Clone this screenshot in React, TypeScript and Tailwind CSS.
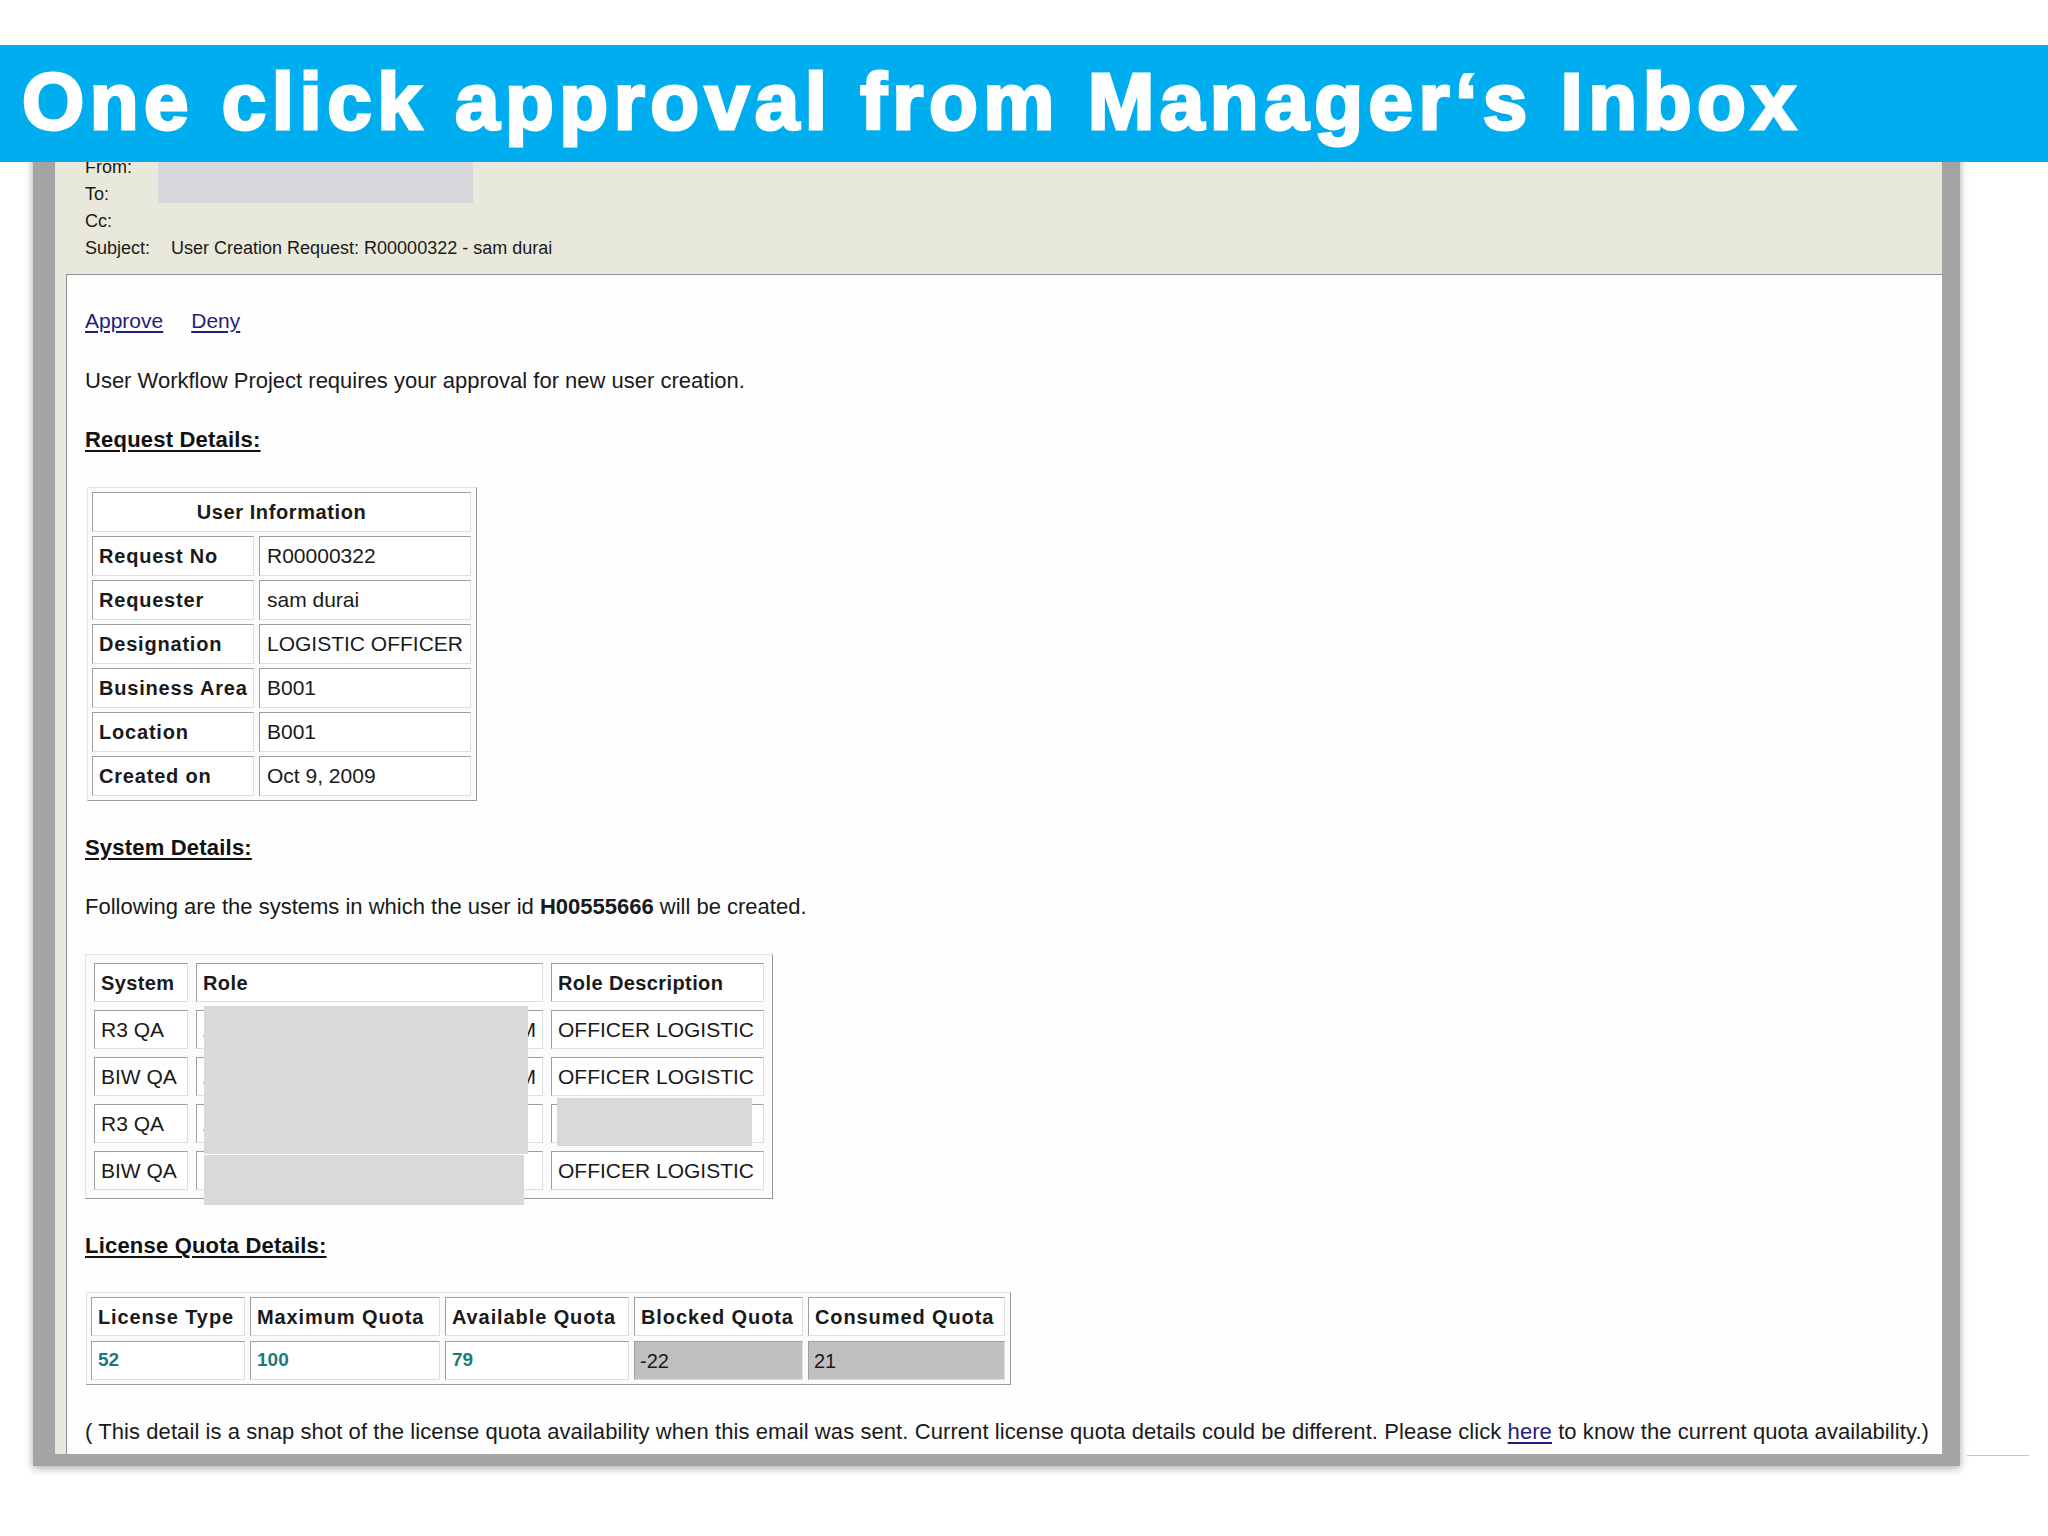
import React from 'react';

const font = "font-['Liberation_Sans',Arial,sans-serif]";

// 3D-ish cell border like old html tables
const cell =
  'border border-t-[#9f9f9f] border-l-[#9f9f9f] border-r-[#dedede] border-b-[#dedede] bg-white';
const outer =
  'border border-t-[#e2e2e2] border-l-[#e2e2e2] border-r-[#9a9a9a] border-b-[#9a9a9a] bg-[#fbfbfb]';

const userInfo: [string, string][] = [
  ['Request No', 'R00000322'],
  ['Requester', 'sam durai'],
  ['Designation', 'LOGISTIC OFFICER'],
  ['Business Area', 'B001'],
  ['Location', 'B001'],
  ['Created on', 'Oct 9, 2009'],
];

const systems = [
  { system: 'R3 QA', left: 'Z', right: 'M', desc: 'OFFICER LOGISTIC' },
  { system: 'BIW QA', left: 'Z', right: 'M', desc: 'OFFICER LOGISTIC' },
  { system: 'R3 QA', left: 'Z', right: '', desc: '' },
  { system: 'BIW QA', left: '', right: '', desc: 'OFFICER LOGISTIC' },
];

const quotaHeads = ['License Type', 'Maximum Quota', 'Available Quota', 'Blocked Quota', 'Consumed Quota'];

function SectionTitle({ children }: { children: React.ReactNode }) {
  return (
    <div className="h-[30px] leading-[30px] text-[22px] font-bold tracking-[0.2px] underline underline-offset-[3px] text-[#111]">
      {children}
    </div>
  );
}

function HeaderRow({ label, value }: { label: string; value?: string }) {
  return (
    <div className="flex h-[27px] items-center text-[18px] text-[#1a1a1a]">
      <div className="w-[86px]">{label}</div>
      <div>{value}</div>
    </div>
  );
}

export default function App() {
  return (
    <div className={`${font} w-[2048px] h-[1536px] bg-white overflow-hidden`}>
      <div className="h-[45px]" />
      <div className="relative z-10 h-[117px] bg-[#00aeef] flex items-center pl-[22px] pb-[4px]">
        <h1 className="text-white text-[80px] leading-none font-bold tracking-[5.5px] [-webkit-text-stroke:3px_white]">
          One click approval from Manager‘s Inbox
        </h1>
      </div>

      <div className="flex items-end pl-[33px] -mt-[40px]">
        {/* mail window */}
        <div className="w-[1927px] bg-[#a4a4a4] pl-[22px] pr-[18px] pb-[12px] shadow-[0_2px_8px_rgba(0,0,0,0.35)]">
          <div className="bg-[#e9e9db]">
            <div className="relative pt-[32px] pb-[12px] pl-[30px]">
              <HeaderRow label="From:" />
              <HeaderRow label="To:" />
              <HeaderRow label="Cc:" />
              <HeaderRow label="Subject:" value="User Creation Request: R00000322 - sam durai" />
              <div className="absolute left-[103px] top-[20px] w-[315px] h-[61px] bg-[#d8d8dc]" />
            </div>

            <div className="ml-[11px] border-l border-t border-[#8f8f8f] bg-[#fefefe] pl-[18px] pt-[31px] pb-[7px] text-[#1a1a1a]">
              <div className="flex h-[30px] items-center gap-[28px] text-[21px] text-[#1f1f7a]">
                <span className="underline underline-offset-[3px]">Approve</span>
                <span className="underline underline-offset-[3px]">Deny</span>
              </div>

              <p className="mt-[30px] h-[30px] leading-[30px] text-[22px]">
                User Workflow Project requires your approval for new user creation.
              </p>

              <div className="mt-[29px]">
                <SectionTitle>Request Details:</SectionTitle>
              </div>

              {/* user information */}
              <div className={`${outer} mt-[32px] ml-[2px] w-[390px] grid grid-cols-[162px_212px] gap-x-[5px] gap-y-[4px] p-[4px]`}>
                <div className={`${cell} col-span-2 h-[40px] flex items-center justify-center font-bold text-[20px] tracking-[0.6px]`}>
                  User Information
                </div>
                {userInfo.map(([k, v]) => (
                  <React.Fragment key={k}>
                    <div className={`${cell} h-[40px] flex items-center pl-[6px] font-bold text-[20px] tracking-[0.8px]`}>{k}</div>
                    <div className={`${cell} h-[40px] flex items-center pl-[7px] text-[21px]`}>{v}</div>
                  </React.Fragment>
                ))}
              </div>

              <div className="mt-[32px]">
                <SectionTitle>System Details:</SectionTitle>
              </div>

              <p className="mt-[29px] h-[30px] leading-[30px] text-[22px]">
                Following are the systems in which the user id <b>H00555666</b> will be created.
              </p>

              {/* systems */}
              <div className="relative mt-[32px] w-[688px]">
                <div className={`${outer} grid grid-cols-[94px_347px_213px] gap-[8px] p-[8px]`}>
                  <div className={`${cell} h-[39px] flex items-center pl-[6px] font-bold text-[20px] tracking-[0.4px]`}>System</div>
                  <div className={`${cell} h-[39px] flex items-center pl-[6px] font-bold text-[20px] tracking-[0.4px]`}>Role</div>
                  <div className={`${cell} h-[39px] flex items-center pl-[6px] font-bold text-[20px] tracking-[0.4px]`}>Role Description</div>
                  {systems.map((s, i) => (
                    <React.Fragment key={i}>
                      <div className={`${cell} h-[39px] flex items-center pl-[6px] text-[21px]`}>{s.system}</div>
                      <div className={`${cell} h-[39px] flex items-center justify-between px-[6px] text-[21px]`}>
                        <span>{s.left}</span>
                        <span>{s.right}</span>
                      </div>
                      <div className={`${cell} h-[39px] flex items-center pl-[6px] text-[21px]`}>{s.desc}</div>
                    </React.Fragment>
                  ))}
                </div>
                {/* redactions */}
                <div className="absolute left-[119px] top-[52px] w-[324px] h-[148px] bg-[#d9d9d9]" />
                <div className="absolute left-[119px] top-[201px] w-[320px] h-[50px] bg-[#d9d9d9]" />
                <div className="absolute left-[472px] top-[144px] w-[195px] h-[48px] bg-[#d9d9d9]" />
              </div>

              <div className="mt-[32px]">
                <SectionTitle>License Quota Details:</SectionTitle>
              </div>

              {/* quota */}
              <div className={`${outer} mt-[31px] ml-[1px] w-[925px] grid grid-cols-[154px_190px_184px_169px_197px] gap-[5px] p-[4px]`}>
                {quotaHeads.map((h) => (
                  <div key={h} className={`${cell} h-[39px] flex items-center pl-[6px] font-bold text-[20px] tracking-[0.9px]`}>
                    {h}
                  </div>
                ))}
                {['52', '100', '79'].map((n) => (
                  <div key={n} className={`${cell} h-[39px] flex items-center pl-[6px] font-bold text-[19px] text-[#1b7b7b]`}>
                    {n}
                  </div>
                ))}
                <div className={`${cell} !bg-[#c0c0c0] h-[39px] flex items-center pl-[5px] text-[20px]`}>-22</div>
                <div className={`${cell} !bg-[#c0c0c0] h-[39px] flex items-center pl-[5px] text-[20px]`}>21</div>
              </div>

              <p className="mt-[32px] h-[30px] leading-[30px] text-[22px] tracking-[0.08px] whitespace-nowrap">
                ( This detail is a snap shot of the license quota availability when this email was sent. Current license quota
                details could be different. Please click{' '}
                <span className="text-[#1f1f7a] underline underline-offset-[3px]">here</span> to know the current quota
                availability.)
              </p>
            </div>
          </div>
        </div>
        <div className="ml-[7px] mb-[10px] w-[62px] h-px bg-[#9fd4ea]" />
      </div>
    </div>
  );
}
